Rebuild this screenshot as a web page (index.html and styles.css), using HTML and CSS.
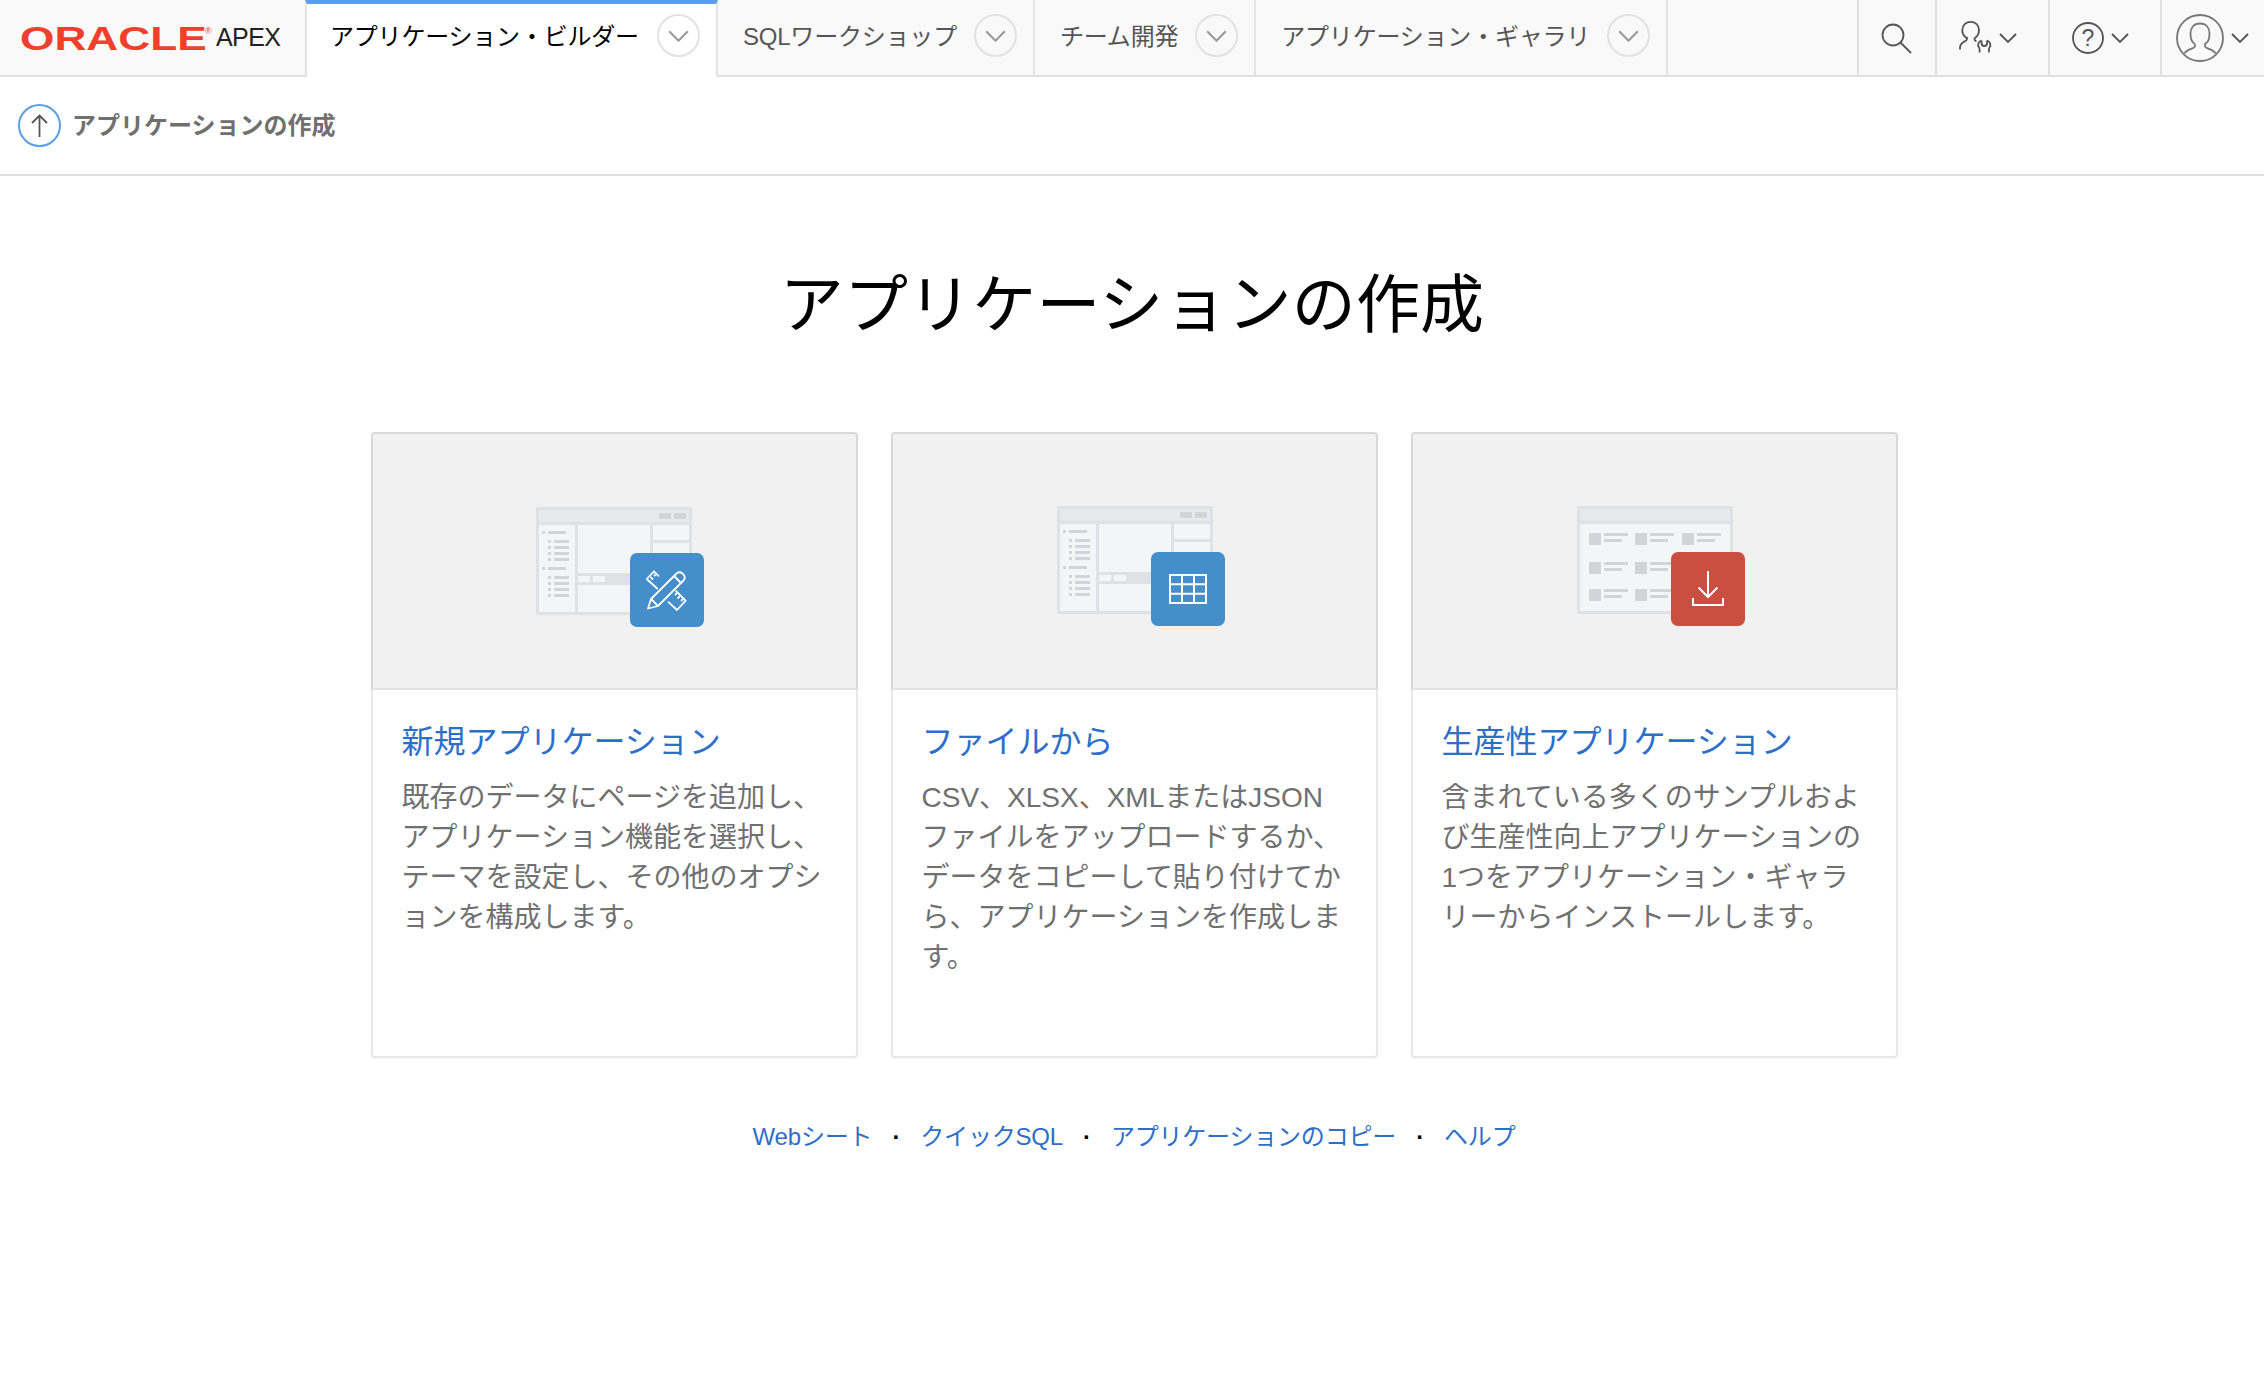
FILE: index.html
```html
<!DOCTYPE html>
<html lang="ja">
<head>
<meta charset="UTF-8">
<title>アプリケーションの作成</title>
<link rel="stylesheet" href="styles.css">
</head>
<body>

<!-- shared drawings -->
<svg class="defs" xmlns="http://www.w3.org/2000/svg">
  <symbol id="chev" viewBox="0 0 18 10">
    <path d="M1 1l8 8 8-8" fill="none" stroke="currentColor" stroke-width="1.8"/>
  </symbol>
  <symbol id="win-nav" viewBox="0 0 156 108">
    <rect width="156" height="108" rx="1" fill="#dfe1e5"/>
    <rect x="3" y="3" width="150" height="12" fill="#e8e9ec"/>
    <rect x="123" y="6" width="12" height="6" fill="#d1d5da"/>
    <rect x="138" y="6" width="12" height="6" fill="#d1d5da"/>
    <rect x="3" y="18" width="36" height="87" fill="#f4f5f7"/>
    <rect x="42" y="18" width="72" height="48" fill="#f4f5f7"/>
    <rect x="42" y="78" width="72" height="27" fill="#f4f5f7"/>
    <rect x="117" y="18" width="36" height="15" fill="#f4f5f7"/>
    <rect x="117" y="36" width="36" height="69" fill="#f4f5f7"/>
    <rect x="42" y="69" width="12" height="6" fill="#f4f5f7"/>
    <rect x="57" y="69" width="12" height="6" fill="#f4f5f7"/>
    <g fill="#d1d5da">
      <rect x="6" y="24" width="3" height="3"/><rect x="12" y="24" width="18" height="3"/>
      <rect x="12" y="33" width="3" height="3"/><rect x="18" y="33" width="15" height="3"/>
      <rect x="12" y="39" width="3" height="3"/><rect x="18" y="39" width="15" height="3"/>
      <rect x="12" y="45" width="3" height="3"/><rect x="18" y="45" width="15" height="3"/>
      <rect x="12" y="51" width="3" height="3"/><rect x="18" y="51" width="15" height="3"/>
      <rect x="6" y="60" width="3" height="3"/><rect x="12" y="60" width="18" height="3"/>
      <rect x="12" y="69" width="3" height="3"/><rect x="18" y="69" width="15" height="3"/>
      <rect x="12" y="75" width="3" height="3"/><rect x="18" y="75" width="15" height="3"/>
      <rect x="12" y="81" width="3" height="3"/><rect x="18" y="81" width="15" height="3"/>
      <rect x="12" y="87" width="3" height="3"/><rect x="18" y="87" width="15" height="3"/>
    </g>
  </symbol>
  <symbol id="win-grid" viewBox="0 0 156 108">
    <rect width="156" height="108" rx="1" fill="#dfe1e5"/>
    <rect x="3" y="3" width="150" height="12" fill="#e8e9ec"/>
    <rect x="3" y="18" width="150" height="87" fill="#f4f5f7"/>
    <g fill="#d1d5da">
      <rect x="12" y="27" width="12" height="12"/><rect x="27" y="27" width="24" height="3"/><rect x="27" y="33" width="18" height="3"/>
      <rect x="58" y="27" width="12" height="12"/><rect x="73" y="27" width="24" height="3"/><rect x="73" y="33" width="18" height="3"/>
      <rect x="105" y="27" width="12" height="12"/><rect x="120" y="27" width="24" height="3"/><rect x="120" y="33" width="18" height="3"/>
      <rect x="12" y="56" width="12" height="12"/><rect x="27" y="56" width="24" height="3"/><rect x="27" y="62" width="18" height="3"/>
      <rect x="58" y="56" width="12" height="12"/><rect x="73" y="56" width="24" height="3"/><rect x="73" y="62" width="18" height="3"/>
      <rect x="12" y="83" width="12" height="12"/><rect x="27" y="83" width="24" height="3"/><rect x="27" y="89" width="18" height="3"/>
      <rect x="58" y="83" width="12" height="12"/><rect x="73" y="83" width="24" height="3"/><rect x="73" y="89" width="18" height="3"/>
    </g>
  </symbol>
</svg>

<header class="topbar">
  <a class="brand" href="#">
    <span class="brand-word"><span class="brand-oracle">ORACLE</span></span>
    <span class="brand-reg">®</span>
    <span class="brand-apex">APEX</span>
  </a>

  <nav class="tabs">
    <a class="tab active" href="#">
      <span class="tab-label">アプリケーション・ビルダー</span>
      <span class="caret"><svg width="21" height="12"><use href="#chev"/></svg></span>
    </a>
    <a class="tab" href="#">
      <span class="tab-label">SQLワークショップ</span>
      <span class="caret"><svg width="21" height="12"><use href="#chev"/></svg></span>
    </a>
    <a class="tab" href="#">
      <span class="tab-label">チーム開発</span>
      <span class="caret"><svg width="21" height="12"><use href="#chev"/></svg></span>
    </a>
    <a class="tab" href="#">
      <span class="tab-label">アプリケーション・ギャラリ</span>
      <span class="caret"><svg width="21" height="12"><use href="#chev"/></svg></span>
    </a>
  </nav>

  <div class="tools">
    <a class="tool tool-search" href="#">
      <svg width="32" height="32" viewBox="0 0 32 32" fill="none" stroke="#555" stroke-width="1.8">
        <circle cx="13" cy="13" r="10.5"/><path d="M20.5 20.5L31 31"/>
      </svg>
    </a>
    <a class="tool" href="#">
      <svg width="33" height="33" viewBox="0 0 33 33" fill="none" stroke="#555" stroke-width="1.8">
        <path d="M7.500 17C4.500 15 3.300 12 3.300 9C3.300 4 7 .9 11.700 .9S20 4 20 9C20 12 18.800 15 16 17"/>
        <path d="M8 16v2C8 21 1 20 1 27v1.500M15.500 16.500V18c0 1 .5 2 2 2.500"/>
        <path d="M22.500 19.500V22c0 2 1.300 3 2.800 3s2.800-1 2.800-3v-2.500"/>
        <path d="M22.500 19.500C19.500 20.500 18 24 20 26.500c.6.8.6 1.500.6 2.500v2.500M28 19.500C31 20.500 32.500 24 30.500 26.500c-.6.8-.6 1.500-.6 2.500v2.500"/>
      </svg>
      <svg class="tool-chev" width="18" height="10"><use href="#chev"/></svg>
    </a>
    <a class="tool" href="#">
      <svg class="help" width="32" height="32" viewBox="0 0 32 32">
        <circle cx="16" cy="16" r="15" fill="none" stroke="#555" stroke-width="1.800"/>
        <text x="16" y="23.500" text-anchor="middle">?</text>
      </svg>
      <svg class="tool-chev" width="18" height="10"><use href="#chev"/></svg>
    </a>
    <a class="tool tool-user" href="#">
      <svg width="48" height="48" viewBox="0 0 48 48" fill="none" stroke="#777" stroke-width="1.800">
        <circle cx="24" cy="24" r="23"/>
        <path d="M19 30c-3-1.500-4.500-5.500-4.500-10.500C14.500 13.500 18 9.500 24 9.500s9.500 4 9.500 10c0 5-1.500 9-4.500 10.500v2.500c1 2.500 8 2.500 10.500 7M19 30v2.500c-1 2.500-8 2.500-10.500 7"/>
      </svg>
      <svg class="tool-chev" width="18" height="10"><use href="#chev"/></svg>
    </a>
  </div>
</header>

<div class="subbar">
  <a class="up" href="#">
    <svg width="43" height="43" viewBox="0 0 43 43" fill="none">
      <circle cx="21.500" cy="21.500" r="20.500" stroke="#5b9ee9" stroke-width="2"/>
      <path d="M21.500 33V11.500M14 19l7.500-7.500L29 19" stroke="#555" stroke-width="1.800"/>
    </svg>
  </a>
  <span class="subbar-title">アプリケーションの作成</span>
</div>

<main class="page">
  <h1 class="page-title">アプリケーションの作成</h1>

  <div class="cards">
    <a class="card" href="#">
      <div class="card-art card-art-new">
        <div class="art">
          <svg class="art-win" width="156" height="108"><use href="#win-nav"/></svg>
          <span class="art-tile blue">
            <svg width="74" height="74" viewBox="0 0 74 74" fill="none" stroke="#fff" stroke-width="1.800" stroke-linejoin="round">
              <path d="M18 55.500L21 46L46.500 20.500Q49.500 18 52.500 20.500L53.500 21.500Q56 24.500 53.500 27.500L28 53Z"/>
              <path d="M21 46L28 53M44 23L51 30"/>
              <path d="M27.700 36L16.700 26L24 18.300L29 23.500"/>
              <path d="M20.500 24L23 26.500M24 21.500L25.500 23"/>
              <path d="M45.700 37.700L55.700 47.700L47 57L38 48.700"/>
              <path d="M47 40L45 42M50 43L47.500 45.500M53 46L51 48"/>
            </svg>
          </span>
        </div>
      </div>
      <div class="card-body">
        <h2 class="card-title">新規アプリケーション</h2>
        <p class="card-text">既存のデータにページを追加し、<br>アプリケーション機能を選択し、<br>テーマを設定し、その他のオプシ<br>ョンを構成します。</p>
      </div>
    </a>

    <a class="card" href="#">
      <div class="card-art">
        <div class="art">
          <svg class="art-win" width="156" height="108"><use href="#win-nav"/></svg>
          <span class="art-tile blue">
            <svg width="74" height="74" viewBox="0 0 74 74" fill="none" stroke="#fff" stroke-width="2">
              <rect x="19" y="23" width="36" height="28"/>
              <path d="M31 23v28M43 23v28M19 32.300h36M19 41.700h36"/>
            </svg>
          </span>
        </div>
      </div>
      <div class="card-body">
        <h2 class="card-title">ファイルから</h2>
        <p class="card-text">CSV、XLSX、XMLまたはJSON<br>ファイルをアップロードするか、<br>データをコピーして貼り付けてか<br>ら、アプリケーションを作成しま<br>す。</p>
      </div>
    </a>

    <a class="card" href="#">
      <div class="card-art">
        <div class="art">
          <svg class="art-win" width="156" height="108"><use href="#win-grid"/></svg>
          <span class="art-tile red">
            <svg width="74" height="74" viewBox="0 0 74 74" fill="none" stroke="#fff" stroke-width="2">
              <path d="M37 19v26M27.500 35.500L37 45l9.500-9.500"/>
              <path d="M22 46v7h30v-7"/>
            </svg>
          </span>
        </div>
      </div>
      <div class="card-body">
        <h2 class="card-title">生産性アプリケーション</h2>
        <p class="card-text">含まれている多くのサンプルおよ<br>び生産性向上アプリケーションの<br>1つをアプリケーション・ギャラ<br>リーからインストールします。</p>
      </div>
    </a>
  </div>

  <ul class="links">
    <li><a href="#">Webシート</a></li>
    <li><a href="#">クイックSQL</a></li>
    <li><a href="#">アプリケーションのコピー</a></li>
    <li><a href="#">ヘルプ</a></li>
  </ul>
</main>

</body>
</html>
```

FILE: styles.css
```css
body{margin:0;background:#fff;color:#000;font-family:"Liberation Sans","Noto Sans CJK JP",sans-serif;}
a{text-decoration:none;color:inherit;}
.defs{display:none;}

/* Top bar */
.topbar{display:flex;height:77px;box-sizing:border-box;background:#f9f9f9;border-bottom:2px solid #e0e0e0;}
.brand{display:flex;align-items:center;width:305px;padding-left:20px;box-sizing:border-box;}
.brand-word{display:block;width:184px;height:34px;}
.brand-oracle{display:inline-block;font-size:34px;line-height:34px;font-weight:700;color:#f0402b;white-space:nowrap;transform:scaleX(1.3);transform-origin:left center;}
.brand-reg{font-size:9px;color:#f0402b;margin:-14px 0 0 1px;width:6px;}
.brand-apex{font-size:25px;color:#222;margin-left:5px;letter-spacing:-.6px;}

.tabs{display:flex;}
.tab{display:flex;align-items:center;gap:17px;padding:0 16px 4px 25px;border-right:2px solid #e4e4e4;font-size:24px;letter-spacing:-.2px;color:#555;}
.tab.active{height:77px;box-sizing:border-box;background:#fff;color:#000;gap:18px;border-left:2px solid #e4e4e4;border-top:4px solid #5b9ee9;padding:0 16px 10px 23px;}
.tab-label{margin-bottom:2px;}
.caret{display:flex;align-items:center;justify-content:center;width:43px;height:43px;box-sizing:border-box;border:2px solid #e2e2e2;border-radius:50%;color:#999;flex:none;}
.caret svg{display:block;}

.tools{display:flex;margin-left:auto;}
.tool{display:flex;align-items:center;gap:7px;padding:0 31px 0 22px;border-left:2px solid #e0e0e0;color:#555;}
.tool svg{display:block;}
.tool-search{padding:0 23px 0 21px;}
.tool-user{padding:0 15px 0 14px;}
.tool-chev{flex:none;}
.help text{font-size:23px;fill:#555;}

/* Sub header */
.subbar{display:flex;align-items:center;gap:11px;height:99px;box-sizing:border-box;padding-left:18px;border-bottom:2px solid #e0e0e0;}
.up svg{display:block;}
.subbar-title{font-size:24px;font-weight:700;color:#707070;margin-bottom:5px;}

/* Page */
.page{display:flex;flex-direction:column;align-items:center;}
.page-title{margin:89px 0 0;font-size:64px;line-height:80px;font-weight:400;letter-spacing:.15px;}

.cards{display:grid;grid-template-columns:repeat(3,487px);column-gap:33px;margin-top:87px;margin-left:4px;}
.card{display:block;box-sizing:border-box;background:#fff;border:2px solid #e8e8e8;border-radius:4px;box-shadow:0 1px 2px rgba(0,0,0,.05);}
.card-art{display:flex;justify-content:flex-start;height:258px;box-sizing:border-box;margin:-2px -2px 0;padding:72px 0 0 164px;background:#f1f1f2;border:2px solid #d9d9d9;border-bottom-color:#e2e2e2;border-radius:4px 4px 0 0;}
.card-art-new{padding:73px 0 0 163px;}
.art{display:grid;grid-template-columns:94px 74px;grid-template-rows:46px 74px;}
.art-win{grid-column:1 / 3;grid-row:1 / 3;display:block;}
.art-tile{grid-column:2;grid-row:2;display:block;border-radius:7px;}
.art-tile svg{display:block;}
.blue{background:#448ecb;}
.red{background:#cb4e42;}

.card-body{padding:32px 29px 78px;}
.card-title{margin:0;font-size:32px;line-height:40px;font-weight:400;color:#2c6fc9;}
.card-text{margin:16px 0 0;font-size:28px;line-height:40px;color:#707070;}

.links{display:flex;list-style:none;margin:61px 0 0;padding:0 0 0 4px;font-size:24px;line-height:36px;color:#2c6fc9;}
.links li{display:flex;letter-spacing:-.2px;}
.links li + li::before{content:"·";width:48px;text-align:center;color:#000;font-weight:700;}
```
